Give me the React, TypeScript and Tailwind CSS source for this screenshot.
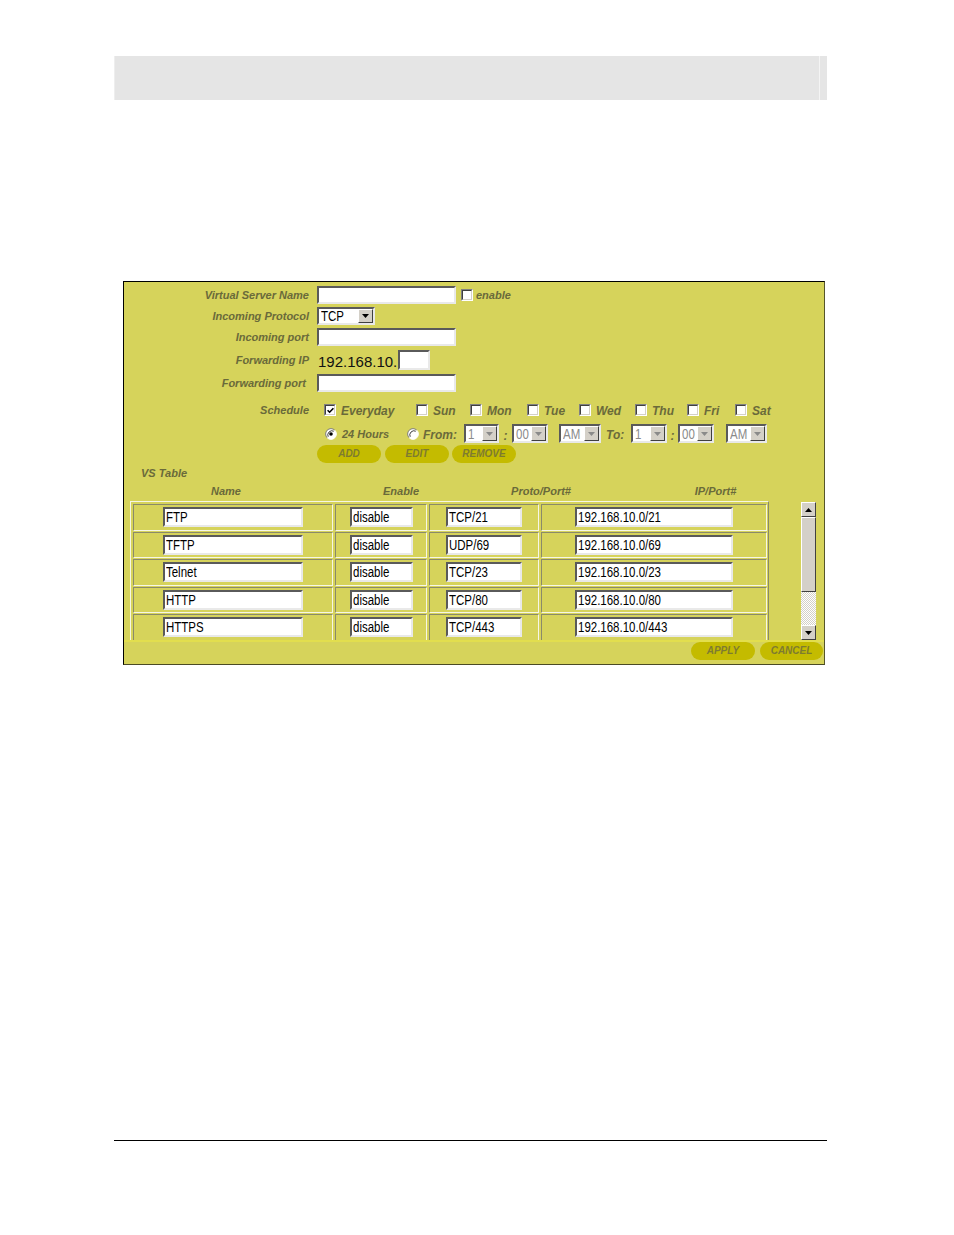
import React from "react";

const LABEL = "text-[11px] font-bold italic text-[#6a6a3a] leading-none whitespace-nowrap";
const INSET =
  "box-border border-2 border-t-[#5a5a5a] border-l-[#5a5a5a] border-r-[#e9e9e9] border-b-[#e9e9e9] bg-white";
const OUTSET =
  "box-border border border-t-[#ffffff] border-l-[#ffffff] border-r-[#404040] border-b-[#404040] bg-[#d4d0c8]";

function T({ children, gray }: { children: React.ReactNode; gray?: boolean }) {
  return (
    <span
      className={`inline-block origin-left scale-x-[0.82] text-[14px] leading-none whitespace-nowrap ${
        gray ? "text-[#8a8a8a]" : "text-black"
      }`}
    >
      {children}
    </span>
  );
}

function Field({ cls, value }: { cls: string; value?: string }) {
  return (
    <div className={`${INSET} flex items-center pl-[1px] overflow-hidden shrink-0 ${cls}`}>
      {value ? <T>{value}</T> : null}
    </div>
  );
}

function Sel({ cls, value, disabled }: { cls: string; value: string; disabled?: boolean }) {
  return (
    <div className={`${INSET} flex items-stretch overflow-hidden shrink-0 ${cls}`}>
      <div className="flex-1 flex items-center pl-[2px] overflow-hidden">
        <T gray={disabled}>{value}</T>
      </div>
      <div className={`${OUTSET} w-[15px] flex items-center justify-center`}>
        <svg width="7" height="4" viewBox="0 0 7 4">
          <path d="M0 0H7L3.5 4Z" fill={disabled ? "#8a8a8a" : "#000"} />
        </svg>
      </div>
    </div>
  );
}

function Check({ checked, cls = "" }: { checked?: boolean; cls?: string }) {
  return (
    <div
      className={`box-border w-[12px] h-[12px] border border-t-[#808080] border-l-[#808080] border-r-white border-b-white shrink-0 ${cls}`}
    >
      <div className="w-full h-full box-border border border-t-[#404040] border-l-[#404040] border-r-[#d4d0c8] border-b-[#d4d0c8] bg-white flex items-center justify-center">
        {checked ? (
          <svg width="7" height="7" viewBox="0 0 7 7">
            <path d="M0.6 3.2 L2.6 5.2 L6.4 1.2" stroke="#000" strokeWidth="1.6" fill="none" />
          </svg>
        ) : null}
      </div>
    </div>
  );
}

function Radio({ checked }: { checked?: boolean }) {
  return (
    <svg width="12" height="12" viewBox="0 0 12 12" className="shrink-0">
      <circle cx="6" cy="6" r="5.2" fill="#fff" />
      <path d="M9.8 2.2 A5.3 5.3 0 0 0 2.2 9.8" stroke="#808080" strokeWidth="1" fill="none" />
      <path d="M2.2 9.8 A5.3 5.3 0 0 0 9.8 2.2" stroke="#ffffff" strokeWidth="1" fill="none" />
      <path d="M8.8 3.2 A4.2 4.2 0 0 0 3.2 8.8" stroke="#404040" strokeWidth="1" fill="none" />
      {checked ? <circle cx="6" cy="6" r="1.8" fill="#000" /> : null}
    </svg>
  );
}

function Pill({ cls, children }: { cls: string; children: React.ReactNode }) {
  return (
    <div
      className={`h-[18px] rounded-full bg-[#c4bb00] flex items-center justify-center text-[10px] font-bold italic text-[#7e7b30] leading-none shrink-0 ${cls}`}
    >
      {children}
    </div>
  );
}

function ScrollBar() {
  return (
    <div className="w-[15px] h-[138px] flex flex-col mt-[1px] shrink-0">
      <div className={`${OUTSET} h-[15px] flex items-center justify-center`}>
        <svg width="7" height="4" viewBox="0 0 7 4">
          <path d="M0 4H7L3.5 0Z" fill="#000" />
        </svg>
      </div>
      <div className={`${OUTSET} h-[75px]`} />
      <div className="h-[33px] bg-[repeating-conic-gradient(#d4d0c8_0_25%,#ffffff_0_50%)] bg-size-[2px_2px]" />
      <div className={`${OUTSET} h-[15px] flex items-center justify-center`}>
        <svg width="7" height="4" viewBox="0 0 7 4">
          <path d="M0 0H7L3.5 4Z" fill="#000" />
        </svg>
      </div>
    </div>
  );
}

const CELL =
  "box-border border border-t-[#8a8a6a] border-l-[#8a8a6a] border-r-[#f6f6e6] border-b-[#f6f6e6] flex items-center justify-center";

const rows = [
  ["FTP", "disable", "TCP/21", "192.168.10.0/21"],
  ["TFTP", "disable", "UDP/69", "192.168.10.0/69"],
  ["Telnet", "disable", "TCP/23", "192.168.10.0/23"],
  ["HTTP", "disable", "TCP/80", "192.168.10.0/80"],
  ["HTTPS", "disable", "TCP/443", "192.168.10.0/443"],
];

const days: [string, string][] = [
  ["Everyday", "w-[92px]"],
  ["Sun", "w-[54px]"],
  ["Mon", "w-[57px]"],
  ["Tue", "w-[52px]"],
  ["Wed", "w-[56px]"],
  ["Thu", "w-[52px]"],
  ["Fri", "w-[48px]"],
  ["Sat", "w-[40px]"],
];

const SMALL = "text-[12px] font-bold italic text-[#6a6a3a] leading-none";

export default function App() {
  return (
    <div className="font-['Liberation_Sans',Arial,sans-serif] bg-white w-[954px] min-h-[1235px] pt-[56px]">
      {/* header grey bar */}
      <div className="ml-[114px] w-[713px] h-[44px] bg-[#e5e5e5] flex">
        <div className="w-[1px] bg-[#eeeeee]" />
        <div className="w-[704px]" />
        <div className="w-[1px] bg-[#f4f4f4]" />
      </div>

      {/* panel */}
      <div className="ml-[123px] mt-[181px] w-[702px] h-[384px] box-border border border-t-black border-l-black border-r-[#55552a] border-b-[#4a4a24] bg-[#d6d35b] flex flex-col">
        {/* Virtual Server Name */}
        <div className="mt-[4px] h-[18px] flex items-center">
          <div className={`w-[185px] text-right ${LABEL}`}>Virtual Server Name</div>
          <Field cls="ml-[8px] w-[139px] h-[18px]" />
          <Check cls="ml-[5px] w-[11px] h-[11px]" />
          <span className={`ml-[3px] ${LABEL}`}>enable</span>
        </div>

        {/* Incoming Protocol */}
        <div className="mt-[3px] h-[18px] flex items-center">
          <div className={`w-[185px] text-right ${LABEL}`}>Incoming Protocol</div>
          <Sel cls="ml-[8px] w-[58px] h-[18px]" value="TCP" />
        </div>

        {/* Incoming port */}
        <div className="mt-[3px] h-[18px] flex items-center">
          <div className={`w-[185px] text-right ${LABEL}`}>Incoming port</div>
          <Field cls="ml-[8px] w-[139px] h-[18px]" />
        </div>

        {/* Forwarding IP */}
        <div className="mt-[4px] h-[20px] flex items-center">
          <div className={`w-[185px] text-right ${LABEL}`}>Forwarding IP</div>
          <span className="ml-[9px] w-[80px] pt-[3px] text-[15px] leading-none text-[#111] whitespace-nowrap">192.168.10.</span>
          <Field cls="w-[32px] h-[20px]" />
        </div>

        {/* Forwarding port */}
        <div className="mt-[4px] h-[18px] flex items-center">
          <div className={`w-[185px] text-right pr-[3px] ${LABEL}`}>Forwarding port</div>
          <Field cls="ml-[8px] w-[139px] h-[18px]" />
        </div>

        {/* Schedule */}
        <div className="mt-[11px] h-[14px] flex items-center">
          <div className={`w-[185px] text-right ${LABEL}`}>Schedule</div>
          <div className="ml-[15px] flex items-center">
            {days.map(([d, w], i) => (
              <div key={d} className={`${w} flex items-center gap-[5px] shrink-0`}>
                <Check checked={i === 0} />
                <span className={`${SMALL} pt-[2px]`}>{d}</span>
              </div>
            ))}
          </div>
        </div>

        {/* time row */}
        <div className="mt-[7px] h-[19px] flex items-center">
          <div className="w-[185px] shrink-0" />
          <div className="ml-[16px] w-[82px] flex items-center gap-[5px] shrink-0">
            <Radio checked />
            <span className={`${LABEL} pt-[2px]`}>24 Hours</span>
          </div>
          <div className="w-[57px] flex items-center gap-[4px] shrink-0">
            <Radio />
            <span className={`${SMALL} pt-[2px]`}>From:</span>
          </div>
          <Sel cls="w-[35px] h-[19px]" value="1" disabled />
          <div className={`w-[13px] text-center ${SMALL} pt-[5px]`}>:</div>
          <Sel cls="w-[36px] h-[19px]" value="00" disabled />
          <div className="w-[11px] shrink-0" />
          <Sel cls="w-[42px] h-[19px]" value="AM" disabled />
          <div className={`w-[30px] pl-[5px] ${SMALL} pt-[3px] shrink-0`}>To:</div>
          <Sel cls="w-[36px] h-[19px]" value="1" disabled />
          <div className={`w-[11px] text-center ${SMALL} pt-[5px]`}>:</div>
          <Sel cls="w-[36px] h-[19px]" value="00" disabled />
          <div className="w-[12px] shrink-0" />
          <Sel cls="w-[41px] h-[19px]" value="AM" disabled />
        </div>

        {/* buttons */}
        <div className="mt-[2px] h-[18px] flex items-center">
          <Pill cls="ml-[193px] w-[64px]">ADD</Pill>
          <Pill cls="ml-[4px] w-[64px]">EDIT</Pill>
          <Pill cls="ml-[3px] w-[64px]">REMOVE</Pill>
        </div>

        {/* VS Table */}
        <div className="mt-[3px] h-[14px] flex items-center pl-[17px]">
          <span className={LABEL}>VS Table</span>
        </div>

        {/* header */}
        <div className="mt-[5px] h-[12px] flex items-center">
          <div className={`w-[204px] text-center ${LABEL}`}>Name</div>
          <div className={`w-[146px] text-center ${LABEL}`}>Enable</div>
          <div className={`w-[134px] text-center ${LABEL}`}>Proto/Port#</div>
          <div className={`w-[215px] text-center ${LABEL}`}>IP/Port#</div>
        </div>

        {/* table + scrollbar */}
        <div className="mt-[4px] h-[139px] flex items-start">
          <div className="ml-[6px] w-[639px] h-[139px] overflow-hidden box-border border border-b-0 border-t-[#f6f6e6] border-l-[#f6f6e6] border-r-[#8a8a6a] pt-[2px] pl-[2px] pr-[1px] shrink-0">
            <div className="grid grid-cols-[200px_92px_110px_226px] auto-rows-[26.5px] gap-x-[2px] gap-y-[1px]">
              {rows.map((r) => (
                <React.Fragment key={r[0]}>
                  <div className={CELL}>
                    <Field cls="w-[140px] h-[20px]" value={r[0]} />
                  </div>
                  <div className={CELL}>
                    <Field cls="w-[63px] h-[20px]" value={r[1]} />
                  </div>
                  <div className={CELL}>
                    <Field cls="w-[76px] h-[20px]" value={r[2]} />
                  </div>
                  <div className={CELL}>
                    <Field cls="w-[158px] h-[20px]" value={r[3]} />
                  </div>
                </React.Fragment>
              ))}
            </div>
          </div>
          <div className="ml-[32px]">
            <ScrollBar />
          </div>
        </div>

        <div className="h-[2px] bg-[#e2de4e]" />

        {/* apply / cancel */}
        <div className="h-[18px] flex items-center justify-end pr-[1px] gap-[5px]">
          <Pill cls="w-[64px]">APPLY</Pill>
          <Pill cls="w-[63px]">CANCEL</Pill>
        </div>
      </div>

      {/* bottom rule */}
      <div className="ml-[114px] mt-[475px] w-[713px] h-[1px] bg-black" />
    </div>
  );
}
